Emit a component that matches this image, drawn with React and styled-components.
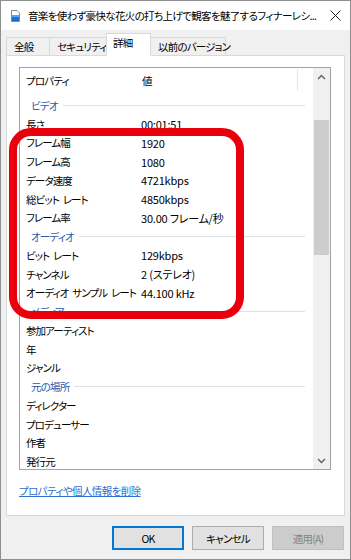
import React from 'react';
import styled, { createGlobalStyle } from 'styled-components';

const GlobalStyle = createGlobalStyle`
  html, body {
    margin: 0;
    padding: 0;
    background: #ffffff;
  }
  body {
    font-family: "Noto Sans CJK JP", "Noto Sans", sans-serif;
    font-size: 10.5px;
    letter-spacing: -0.8px;
    word-spacing: 2.5px;
    font-feature-settings: "palt";
    color: #000;
  }
`;

const rows = [
  { group: 'ビデオ' },
  { label: '長さ', value: '00:01:51' },
  { label: 'フレーム幅', value: '1920' },
  { label: 'フレーム高', value: '1080' },
  { label: 'データ速度', value: '4721kbps' },
  { label: '総ビット レート', value: '4850kbps' },
  { label: 'フレーム率', value: '30.00 フレーム/秒' },
  { group: 'オーディオ' },
  { label: 'ビット レート', value: '129kbps' },
  { label: 'チャンネル', value: '2 (ステレオ)' },
  { label: 'オーディオ サンプル レート', value: '44.100 kHz' },
  { group: 'メディア' },
  { label: '参加アーティスト' },
  { label: '年' },
  { label: 'ジャンル' },
  { group: '元の場所' },
  { label: 'ディレクター' },
  { label: 'プロデューサー' },
  { label: '作者' },
  { label: '発行元' },
];

const tabs = [
  { name: '全般', w: 44 },
  { name: 'セキュリティ', w: 58 },
  { name: '詳細', w: 45, active: true },
  { name: '以前のバージョン', w: 76 },
];

const Frame = styled.div`
  position: relative;
  width: 351px;
  height: 560px;
`;

const Window = styled.div`
  width: 351px;
  height: 560px;
  box-sizing: border-box;
  border: 1px solid #8f8f8f;
  background: #f0f0f0;
  display: flex;
  flex-direction: column;
  overflow: hidden;
`;

const TitleBar = styled.div`
  height: 29px;
  flex-shrink: 0;
  background: #ffffff;
  display: flex;
  align-items: center;
  padding-left: 10px;
`;

const Title = styled.div`
  flex: 1;
  margin-left: 8px;
  white-space: nowrap;
  overflow: hidden;
  letter-spacing: -0.65px;
  color: #000;
`;

const CloseBox = styled.div`
  width: 30px;
  height: 29px;
  display: flex;
  align-items: center;
  justify-content: center;
  flex-shrink: 0;
`;

const Body = styled.div`
  flex: 1;
  display: flex;
  flex-direction: column;
  padding: 0 5px;
`;

const TabRow = styled.div`
  height: 26px;
  display: flex;
  align-items: flex-end;
  position: relative;
  z-index: 1;
  margin-bottom: -1px;
`;

const Tab = styled.div`
  width: ${p => p.w}px;
  box-sizing: border-box;
  height: ${p => (p.active ? 23 : 19)}px;
  margin-right: -1px;
  border: 1px solid #d9d9d9;
  border-bottom: ${p => (p.active ? '1px solid #ffffff' : '1px solid #d9d9d9')};
  background: ${p => (p.active ? '#ffffff' : '#f0f0f0')};
  padding-left: ${p => (p.active ? 6 : 7)}px;
  padding-top: ${p => (p.active ? 1 : 0)}px;
  display: flex;
  align-items: ${p => (p.active ? 'flex-start' : 'center')};
  white-space: nowrap;
  position: relative;
  z-index: ${p => (p.active ? 2 : 0)};
`;

const Panel = styled.div`
  height: 461px;
  box-sizing: border-box;
  background: #ffffff;
  border: 1px solid #d9d9d9;
  padding: 11px 12px 0 12px;
  display: flex;
  flex-direction: column;
`;

const ListBox = styled.div`
  width: 312px;
  height: 403px;
  box-sizing: border-box;
  border: 1px solid #a3a3a3;
  display: flex;
`;

const ListContent = styled.div`
  flex: 1;
  overflow: hidden;
  display: flex;
  flex-direction: column;
`;

const HeaderRow = styled.div`
  height: 24px;
  flex-shrink: 0;
  display: flex;
  align-items: center;
  margin-bottom: 4px;
`;

const HeaderCell = styled.div`
  width: ${p => p.w}px;
  box-sizing: border-box;
  padding-left: ${p => p.pad}px;
  height: 22px;
  display: flex;
  align-items: center;
  border-right: ${p => (p.divider ? '1px solid #e5e5e5' : 'none')};
`;

const Row = styled.div`
  height: 18.75px;
  flex-shrink: 0;
  display: flex;
  align-items: center;
  white-space: nowrap;
`;

const Label = styled.div`
  width: 121px;
  padding-left: 6px;
  box-sizing: border-box;
  letter-spacing: -0.9px;
  color: #000;
`;

const Value = styled.div`
  font-size: 11px;
  letter-spacing: -0.2px;
  word-spacing: 0;
  color: #000;
`;

const GroupRow = styled(Row)`
  padding-left: 11px;
  padding-right: 8px;
  color: #2b5aa6;
`;

const GroupLine = styled.div`
  flex: 1;
  height: 1px;
  margin-left: 5px;
  background: #dbe2ea;
`;

const ScrollBar = styled.div`
  width: 17px;
  background: #f0f0f0;
  display: flex;
  flex-direction: column;
  align-items: center;
`;

const ScrollArrow = styled.div`
  height: 17px;
  width: 17px;
  display: flex;
  align-items: center;
  justify-content: center;
  flex-shrink: 0;
`;

const Track = styled.div`
  flex: 1;
  width: 100%;
  padding-top: 35px;
  box-sizing: border-box;
`;

const Thumb = styled.div`
  width: 15px;
  margin: 0 auto;
  height: 135px;
  background: #cdcdcd;
`;

const Link = styled.a`
  margin-top: 13px;
  line-height: 16px;
  color: #2e6fd0;
  letter-spacing: -0.6px;
  text-decoration: underline;
  align-self: flex-start;
`;

const Footer = styled.div`
  display: flex;
  justify-content: flex-end;
  gap: 8px;
  padding: 10px 1px 0 0;
`;

const Button = styled.div`
  width: 72px;
  height: 24px;
  box-sizing: border-box;
  display: flex;
  align-items: center;
  justify-content: center;
  background: ${p => (p.disabled ? '#cccccc' : '#e1e1e1')};
  color: ${p => (p.disabled ? '#838383' : '#000')};
  border: ${p =>
    p.primary ? '2px solid #0078d7' : p.disabled ? '1px solid #bfbfbf' : '1px solid #adadad'};
`;

const Highlight = styled.div`
  position: absolute;
  left: 9px;
  top: 128px;
  width: 235px;
  height: 191px;
  box-sizing: border-box;
  border: 8px solid #e8000d;
  border-radius: 22px;
  pointer-events: none;
`;

const FileIcon = () => (
  <svg width="9" height="12" viewBox="0 0 9 12">
    <path d="M0.5 0.5 H6 L8.5 3 V11.5 H0.5 Z" fill="#fff" stroke="#8a8a8a" />
    <rect x="1" y="5" width="7" height="6" fill="#1f6fd1" />
    <rect x="1" y="5" width="7" height="2" fill="#63a4ee" />
  </svg>
);

const CloseIcon = () => (
  <svg width="11" height="11" viewBox="0 0 11 11">
    <path d="M0.5 0.5 L10.5 10.5 M10.5 0.5 L0.5 10.5" stroke="#222" strokeWidth="1" />
  </svg>
);

const Chevron = ({ down }) => (
  <svg width="9" height="6" viewBox="0 0 9 6">
    <path
      d={down ? 'M1 1 L4.5 4.5 L8 1' : 'M1 5 L4.5 1.5 L8 5'}
      fill="none"
      stroke="#606060"
      strokeWidth="1.4"
    />
  </svg>
);

const App = () => {
  return (
    <Frame>
      <GlobalStyle />
      <Window>
        <TitleBar>
          <FileIcon />
          <Title>音楽を使わず豪快な花火の打ち上げで観客を魅了するフィナーレシ...</Title>
          <CloseBox>
            <CloseIcon />
          </CloseBox>
        </TitleBar>
        <Body>
          <TabRow>
            {tabs.map(t => (
              <Tab key={t.name} w={t.w} active={t.active}>
                {t.name}
              </Tab>
            ))}
          </TabRow>
          <Panel>
            <ListBox>
              <ListContent>
                <HeaderRow>
                  <HeaderCell w={121} pad={6}>プロパティ</HeaderCell>
                  <HeaderCell w={157} pad={1} divider>
                    値
                  </HeaderCell>
                </HeaderRow>
                {rows.map((r, i) =>
                  r.group ? (
                    <GroupRow key={i}>
                      {r.group}
                      <GroupLine />
                    </GroupRow>
                  ) : (
                    <Row key={i}>
                      <Label>{r.label}</Label>
                      <Value>{r.value}</Value>
                    </Row>
                  )
                )}
              </ListContent>
              <ScrollBar>
                <ScrollArrow>
                  <Chevron />
                </ScrollArrow>
                <Track>
                  <Thumb />
                </Track>
                <ScrollArrow>
                  <Chevron down />
                </ScrollArrow>
              </ScrollBar>
            </ListBox>
            <Link>プロパティや個人情報を削除</Link>
          </Panel>
          <Footer>
            <Button primary>OK</Button>
            <Button>キャンセル</Button>
            <Button disabled>適用(A)</Button>
          </Footer>
        </Body>
      </Window>
      <Highlight />
    </Frame>
  );
};

export default App;
